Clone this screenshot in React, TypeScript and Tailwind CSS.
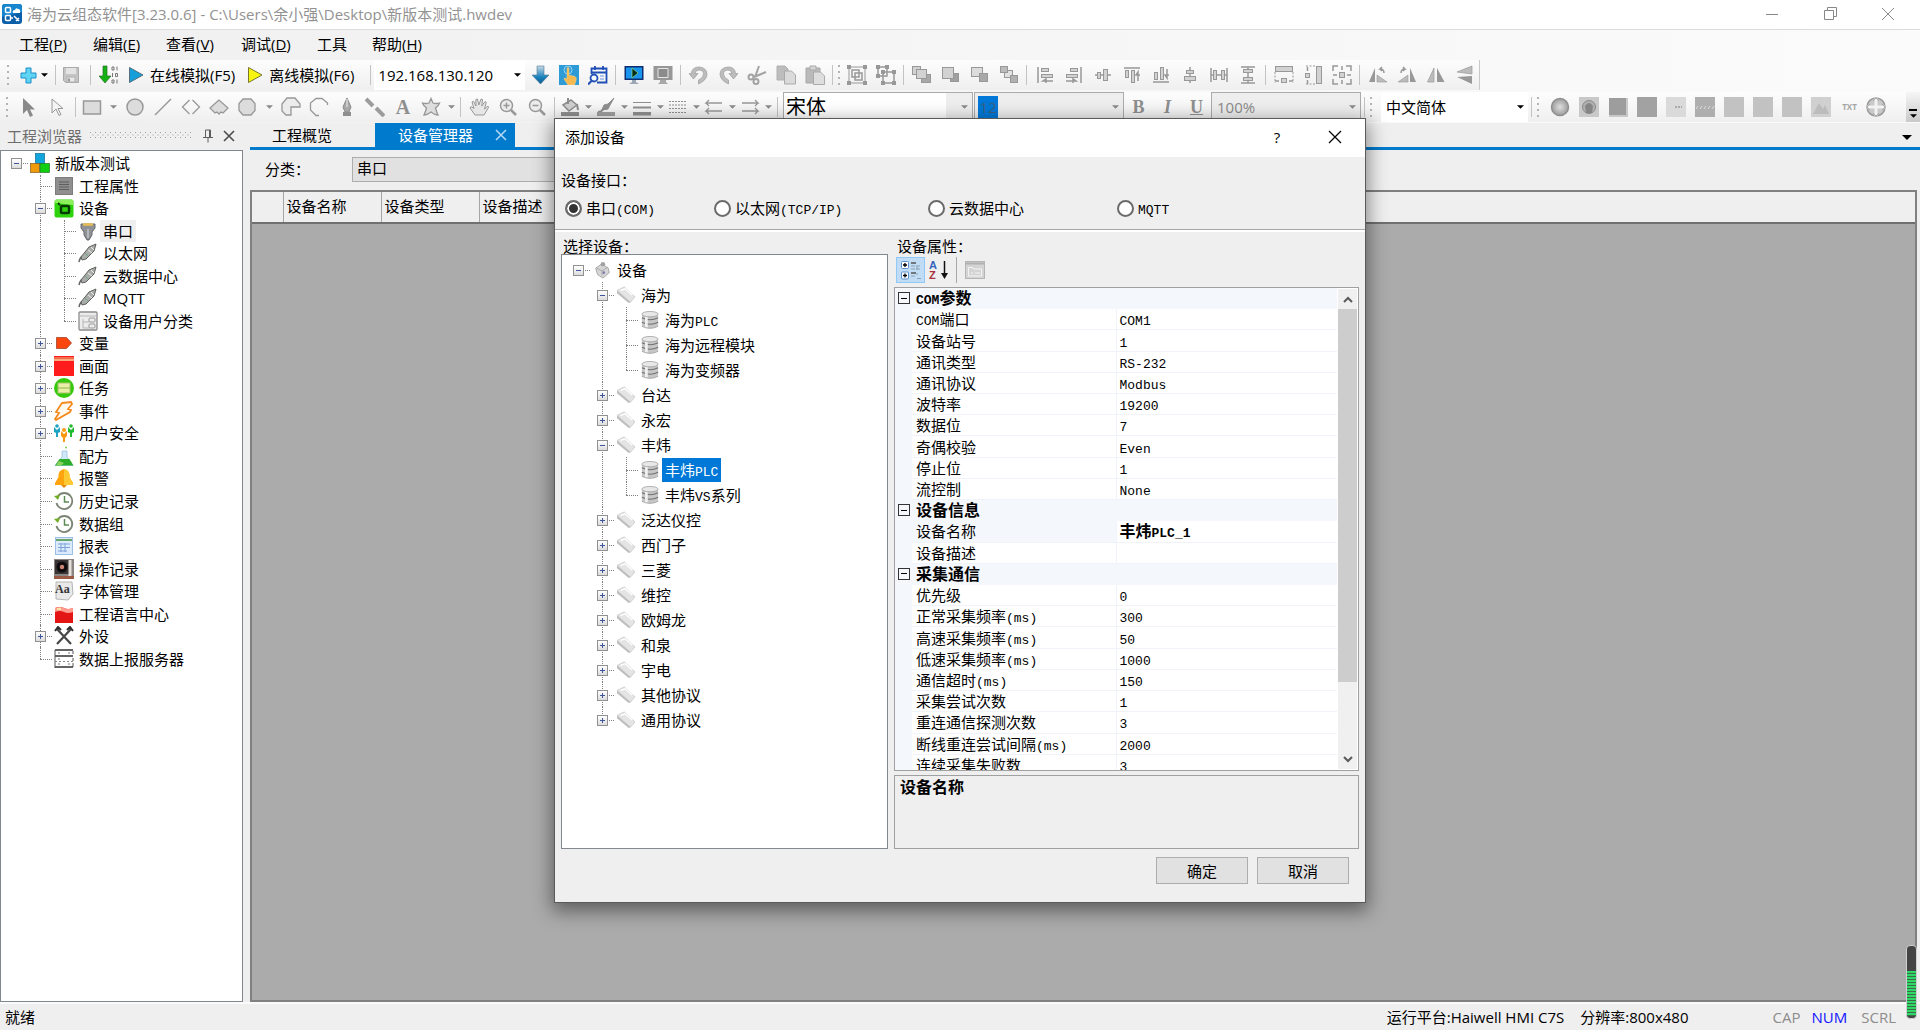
import type { ReactNode } from "react";

const UI = "font-['Open_Sans','Noto_Sans_CJK_SC',sans-serif]";

function Svg({ children, className = "w-5 h-5" }: { children: ReactNode; className?: string }) {
  return (
    <svg viewBox="0 0 20 20" className={`shrink-0 ${className}`} fill="none" aria-hidden="true">
      {children}
    </svg>
  );
}

/* ---------- toolbar icons ---------- */

const G = "#989898";
const L = "#d2d2d2";

const box = (x: number, y: number, w: number, h: number, fill = L) => (
  <rect x={x + 0.5} y={y + 0.5} width={w - 1} height={h - 1} fill={fill} stroke={G} />
);

const dots = (pts: number[][], s = 4) =>
  pts.map(([x, y], i) => <rect key={i} x={x} y={y} width={s} height={s} fill={G} />);

const tool: Record<string, ReactNode> = {
  plus: <path d="M8 3h5v5h5v5h-5v5H8v-5H3V8h5z" fill="#5fd4f5" stroke="#1c8fc4" />,
  save: (
    <>
      <path d="M2.5 2.5h15v15h-13l-2-2z" fill="#c4c4c4" stroke="#a9a9a9" />
      <rect x="5" y="3" width="10" height="6" fill="#e4e4e4" />
      <path d="M6 17v-5h8v5z" fill="#e8e8e8" stroke="#b0b0b0" />
      <path d="M8 13.5v3" stroke="#999" strokeWidth="2" />
    </>
  ),
  binary: (
    <>
      <path d="M4 1h4v10h4l-6 7-6-7h4z" fill="#12b312" stroke="#2f6b2f" strokeWidth=".7" />
      <path d="M13 2h2v3h-2zM18 1.500v4M13.500 8v4M16.500 8.500h2v3h-2zM13 15h2v3h-2zM18 14.500v4" stroke="#777" />
    </>
  ),
  down: <path d="M7 1h7v9h5l-8.500 9L2 10h5z" fill="url(#blueArrow)" stroke="#557b93" strokeWidth=".6" />,
  touch: (
    <>
      <rect width="20" height="20" fill="#2f9bd6" />
      <circle cx="9" cy="5" r="4" stroke="#8fd2f2" />
      <path d="M8 3q1.500-1 2 0v7l6 1.500q2 1 1 4L15.500 20H9l-4-6q0-2 3 0z" fill="#f6b950" stroke="#f8d48c" strokeWidth=".5" />
    </>
  ),
  calendar: (
    <>
      <path d="M3.500 9V3.500h15v14H9M3 7.500h16M7 1v4M15 1v4" stroke="#1f4fb5" strokeWidth="1.800" />
      <circle cx="6" cy="13" r="3.500" fill="#f4f8ff" stroke="#1f4fb5" strokeWidth="1.800" />
      <path d="M3.500 16L0 19.500" stroke="#1f4fb5" strokeWidth="2" />
      <path d="M12 11h4M12 14h4" stroke="#6d93dd" />
    </>
  ),
  monitorPlay: (
    <>
      <rect x=".5" y="1" width="19" height="14" fill="#0d2f6e" />
      <rect x="2" y="2.500" width="16" height="11" fill="#1995f0" />
      <path d="M8 3l6 5-6 5z" fill="#062a1c" stroke="#8be07c" strokeWidth=".7" />
      <path d="M8 15h4v2l3 2H5l3-2z" fill="#9ba7b5" />
    </>
  ),
  monitor: (
    <>
      <path d="M.5 1h19v14H.5z" fill="#979797" />
      <path d="M5 3.500h10v9H5z" stroke="#e6e6e6" fill="#8b8b8b" />
      <path d="M7 15h6v2l2 2H5l2-2z" fill="#a8a8a8" />
    </>
  ),
  undo: <path d="M9.500 19v-4q5-2 5-6 0-4-4.500-4Q6.500 5 6 8.500h3L4.500 14 0 8.500h2.500Q3 2 10 2q7.500 .5 8 7 0 6-8.500 10z" fill="#bcbcbc" stroke="#a2a2a2" strokeWidth=".8" />,
  redo: <path d="M10.500 19v-4q-5-2-5-6 0-4 4.500-4 3.500 0 4 3.500h-3l4.500 5.500L20 8.500h-2.500Q17 2 10 2 2.500 2.500 2 9q0 6 8.500 10z" fill="#bcbcbc" stroke="#a2a2a2" strokeWidth=".8" />,
  cut: (
    <g stroke="#a3a3a3" strokeWidth="2">
      <path d="M12 1L8 12M19 7L7 12" />
      <circle cx="4" cy="12" r="2.500" />
      <circle cx="9" cy="16.500" r="2.500" />
    </g>
  ),
  copy: (
    <>
      <path d="M1 1h8l3 3v11H1z" fill="#bdbdbd" stroke="#b0b0b0" />
      <path d="M8.500 6h7l4 4v9h-11z" fill="#dadada" stroke="#aaa" />
    </>
  ),
  paste: (
    <>
      <path d="M1 3h14v15H1z" fill="#bababa" stroke="#a8a8a8" />
      <path d="M5 1h6v4H5z" fill="#d5d5d5" stroke="#aaa" />
      <path d="M8.500 7h7l4 4v8.500h-11z" fill="#dedede" stroke="#aaa" />
    </>
  ),
  group: (
    <>
      <path d="M2 2h16v16H2z" stroke={G} />
      <path d="M5 5h7v7H5zM8 8h7v7H8z" stroke={G} strokeWidth="1.500" />
      {dots([[0, 0], [16, 0], [0, 16], [16, 16]])}
    </>
  ),
  ungroup: (
    <>
      <path d="M2 2h9v9H2zM7 7h11v11H7z" stroke={G} strokeWidth="1.500" />
      {dots([[0, 0], [9, 0], [0, 9], [5, 5], [16, 5], [5, 16], [16, 16]])}
    </>
  ),
  layer1: <>{box(0, 1, 9, 9)}{box(9, 9, 10, 9, "#a8a8a8")}{box(4, 4, 11, 10)}</>,
  layer2: <>{box(9, 8, 9, 9, "#a0a0a0")}{box(1, 2, 12, 12)}</>,
  layer3: <>{box(1, 2, 12, 10, "#dcdcdc")}{box(9, 8, 9, 9, "#a8a8a8")}</>,
  layer4: <>{box(5, 5, 9, 8, "#e2e2e2")}{box(1, 1, 8, 7, "#bbb")}{box(11, 10, 8, 8, "#b0b0b0")}</>,
  alignL: <><path d="M3 2v16M18 16H8l3-2v4" stroke={G} strokeWidth="1.500" />{box(6, 3, 8, 4)}{box(6, 9, 12, 4)}</>,
  alignR: <><path d="M17 2v16M2 16h10l-3-2v4" stroke={G} strokeWidth="1.500" />{box(6, 3, 8, 4)}{box(2, 9, 12, 4)}</>,
  alignM: <><path d="M2 10h16" stroke={G} strokeWidth="1.500" />{box(4, 7, 4, 7)}{box(10, 4, 5, 12)}</>,
  alignT: <><path d="M2 3h16M16 16V7l-2 3h4" stroke={G} strokeWidth="1.500" />{box(3, 5, 4, 8)}{box(9, 5, 4, 13)}</>,
  alignB: <><path d="M2 17h16M16 4v9l-2-3h4" stroke={G} strokeWidth="1.500" />{box(3, 7, 4, 8)}{box(9, 2, 4, 13)}</>,
  alignC: <><path d="M10 2v16" stroke={G} strokeWidth="1.500" />{box(6, 5, 8, 4)}{box(4, 11, 12, 5)}</>,
  spreadH: <><path d="M2 3v14M18 3v14M2 10h16" stroke={G} strokeWidth="1.500" />{box(4, 5, 4, 10)}{box(12, 5, 4, 10)}</>,
  spreadV: <><path d="M3 2h14M3 18h14M10 2v16" stroke={G} strokeWidth="1.500" />{box(5, 4, 10, 4)}{box(5, 12, 10, 4)}</>,
  sameW: <>{box(1, 1, 18, 6)}{box(7, 13, 6, 5)}<path d="M1 7v11M19 7v11" stroke={G} strokeDasharray="2 1.500" /><path d="M1 16h4M15 16h4" stroke={G} strokeWidth="1.500" /></>,
  sameH: <>{box(13, 1, 6, 18)}{box(2, 8, 5, 5)}<path d="M3 1h10M3 19h10" stroke={G} strokeDasharray="2 1.500" /><path d="M4.500 2v4M4.500 15v4" stroke={G} strokeWidth="1.500" /></>,
  sameWH: <>{box(7, 7, 6, 6)}<path d="M1 6V1h5M14 1h5v5M19 14v5h-5M6 19H1v-5M10 1v4M10 15v4M1 10h4M15 10h4" stroke={G} strokeWidth="1.500" /></>,
  rotL: <><path d="M1 17L7 3v14z" fill={G} /><path d="M9 10l10 7H9z" fill="#bbb" stroke={G} strokeWidth=".6" /><path d="M16 8q0-4-4-4l2-2m-2 2l2 2" stroke={G} strokeWidth="1.500" /></>,
  rotR: <><path d="M19 17L13 3v14z" fill={G} /><path d="M11 10L1 17h10z" fill="#bbb" stroke={G} strokeWidth=".6" /><path d="M4 8q0-4 4-4L6 2m2 2L6 6" stroke={G} strokeWidth="1.500" /></>,
  flipH: <><path d="M1.500 17L8 3v14z" fill="#bcbcbc" stroke={G} strokeWidth=".7" /><path d="M11 3v14h7.500z" fill={G} /></>,
  flipV: <><path d="M17 1v8L2 7z" fill="#bcbcbc" stroke={G} strokeWidth=".7" /><path d="M2 12l15-1v8z" fill={G} /></>,

  cursor: <path d="M4 1v16l4-4 3 7 3-1.500-3-6h5z" fill="#8a8a8a" />,
  cursorO: <path d="M4 2v14l4-4 3 6.500 2-1-3-6h5z" fill="#f4f4f4" stroke={G} />,
  rect: <rect x="1.500" y="4" width="17" height="13" fill="#dcdcdc" stroke={G} strokeWidth="1.500" />,
  circle: <circle cx="10" cy="10" r="8" fill="#dcdcdc" stroke={G} strokeWidth="1.500" />,
  line: <path d="M2 18L18 2" stroke={G} strokeWidth="1.500" />,
  diamond: <path d="M8.500 3L1.500 10l7 7M11.500 3l7 7-7 7" stroke={G} strokeWidth="1.300" />,
  polygon: <path d="M10 3L1 11l5 5 2-1 2 2 2-2 2 1 5-5z" fill="#dcdcdc" stroke={G} strokeWidth="1.300" />,
  octagon: <path d="M6 2h8l4 4.500v7L14 18H6l-4-4.500v-7z" fill="#dcdcdc" stroke={G} strokeWidth="1.300" />,
  pie: <path d="M10 18H5l-4-4V7l5-6h8l5 6v3h-9z" fill="#ececec" stroke={G} strokeWidth="1.300" />,
  arc: <path d="M10 18.500H7L1.500 13V6L7 1.500h6L18.500 6v2" stroke={G} strokeWidth="1.300" />,
  pen: <><path d="M10 1l4 9-2 5H8l-2-5z" fill="#a8a8a8" stroke="#8b8b8b" /><path d="M6 15h8v4H6z" fill="#8f8f8f" /><path d="M10 2v8" stroke="#eee" /></>,
  dashLine: <path d="M1 2l7 7M11 11l8 8" stroke="#9c9c9c" strokeWidth="4" />,
  star: <path d="M10 1.500l2 4.500q3 1 6.500 0-1 3-4 5 1 4 2.500 7-4-.500-7-3-3 2.500-7 3 1.500-3 2.500-7-3-2-4-5 3.500 1 6.500 0z" fill="#dedede" stroke={G} strokeWidth="1.300" />,
  hand: <path d="M6 18l-5-7 1-1.500 3 2L3 5l1.500-.8L7 9 6.800 2.500 8.500 2l1.300 6L12 2l1.500.5L12.800 9 16 4.500l1.300.8L15.500 12 19 9l.5 1.500L15 18z" fill="#e6e6e6" stroke={G} />,
  zoomIn: <><circle cx="8.500" cy="8.500" r="6" fill="#ececec" stroke={G} strokeWidth="1.500" /><path d="M5.500 8.500h6M8.500 5.500v6" stroke={G} strokeWidth="1.500" /><path d="M13 13l5 5" stroke={G} strokeWidth="2.500" /></>,
  zoomOut: <><circle cx="8.500" cy="8.500" r="6" fill="#ececec" stroke={G} strokeWidth="1.500" /><path d="M5.500 8.500h6" stroke={G} strokeWidth="1.500" /><path d="M13 13l5 5" stroke={G} strokeWidth="2.500" /></>,
  bucket: <><path d="M3 8l8-5 6 5-8 6z" fill="#d0d0d0" stroke="#8d8d8d" strokeWidth="1.500" /><path d="M8 1v6M17 7l1 6" stroke="#8d8d8d" strokeWidth="2" /><path d="M1 15h18v4H1z" fill="#8f8f8f" /></>,
  brush: <><path d="M18 1l-6 6-4 1-2 5 6-1 2-4z" fill="#8f8f8f" stroke="#8f8f8f" /><path d="M2 15q4 0 5-3" stroke="#8f8f8f" strokeWidth="2" /><path d="M1 15h18v4H1z" fill="#a0a0a0" /></>,
  weights: <path d="M1 5h18v1H1zM1 9.500h18v2H1zM1 15h18v3.500H1z" fill="#8f8f8f" />,
  dashes: <path d="M1 4.500h18M1 8h18M1 11.500h18M1 15.500h18" stroke="#8f8f8f" strokeDasharray="2 1" />,
  arrowsL: <path d="M18 6H2l3-3M2 6l3 3M18 14H2l3-3M2 14l3 3" stroke={G} strokeWidth="1.300" />,
  arrowsR: <path d="M2 6h16l-3-3M18 6l-3 3M2 14h16l-3-3M18 14l-3 3" stroke={G} strokeWidth="1.300" />,

  lamp: <circle cx="10" cy="10" r="8.500" fill="url(#grayBall)" stroke="#8f8f8f" strokeWidth="1.500" />,
  knob: <><rect width="20" height="20" fill="#c9c9c9" /><circle cx="10" cy="10" r="6.500" fill="#b0b0b0" stroke="#8a8a8a" /><path d="M6 9q4-6 8 0l-1 7H7z" fill="#858585" /></>,
  sq1: <><path d="M1 1h17v17H1z" fill="#9d9d9d" /><path d="M1 19h18V1" stroke="#bbb" strokeWidth="1.500" /></>,
  sq2: <rect width="20" height="20" fill="#a2a2a2" />,
  sq3: <><rect width="20" height="20" fill="#dadada" /><path d="M9 10h7" stroke="#aaa" strokeWidth="2" strokeDasharray="2 1" /></>,
  sq4: <><rect width="20" height="20" fill="#aeaeae" /><path d="M1 12l2-3M5 12l2-3M9 12l2-3M13 12l2-3M17 12l2-3" stroke="#ddd" /></>,
  sq5: <rect width="20" height="20" fill="#c2c2c2" />,
  picture: <><rect width="20" height="20" fill="#d0d0d0" /><path d="M2 17l6-11 4 6 2-4 4 9z" fill="#bcbcbc" /></>,
  globe: <><circle cx="10" cy="10" r="9" fill="#c9c9c9" stroke="#999" strokeWidth="1.500" /><path d="M10 1v18M1 10h18" stroke="#f2f2f2" strokeWidth="3" /><path d="M7 4l3-3 3 3M7 16l3 3 3-3M4 7l-3 3 3 3M16 7l3 3-3 3" stroke="#aaa" /></>,
};

/* ---------- tree icons ---------- */

const plug = (
  <>
    <path d="M1 19q1-5 4-6" stroke="#666" strokeWidth="1.500" />
    <path d="M3 14L11 4l7-3-2 7-8 8-4 1z" fill="#a9aca9" stroke="#5d605d" />
    <path d="M10 7l4 3M13 4l3 3" stroke="#eee" />
    <path d="M7 10l3 3" stroke="#6ca88a" />
  </>
);

const clock = (
  <>
    <path d="M4 5a8 8 0 1 1-1.500 7" stroke="#7b8474" strokeWidth="1.800" />
    <path d="M10.500 5v6H15" stroke="#5b8a52" strokeWidth="1.500" />
    <path d="M0 5l6-1-2 5z" fill="#6fae22" />
  </>
);

const node: Record<string, ReactNode> = {
  cubes: (
    <>
      <rect x="5.500" y=".5" width="9" height="10" fill="#12a5dc" stroke="#0c6d94" strokeWidth=".7" />
      <rect x=".5" y="10.500" width="9" height="9" fill="#f09a0c" stroke="#7d5a1e" strokeWidth=".7" />
      <rect x="10" y="10.500" width="9.500" height="9" fill="#10cf10" stroke="#29702b" strokeWidth=".7" />
    </>
  ),
  props: <><rect x="1.500" y="1.500" width="17" height="17" fill="#8f8f8f" stroke="#7c7c7c" /><path d="M5 6h10M5 8.500h10M5 11h10M5 13.500h10" stroke="#5e5e5e" /></>,
  device: <><rect x=".5" y="1.500" width="19" height="18" rx="2" fill="#2ed30d" /><path d="M1 2h18v5L1 5z" fill="#8cf05c" /><rect x="7" y="8" width="8" height="7" rx="1" stroke="#063b06" strokeWidth="2.500" /><path d="M4 5l2 2" stroke="#063b06" strokeWidth="2" /></>,
  serial: <><path d="M3 3h14v4l-3 4v3l-3 5H9l-3-5v-3L3 7z" fill="#8e9196" stroke="#66696e" /><path d="M5 3.500h10" stroke="#e8bd55" strokeWidth="2.500" /><path d="M10 8v9" stroke="#dfdfdf" /></>,
  plug,
  category: <><rect x="1" y="1" width="18" height="18" rx="1" fill="#ececec" stroke="#8c8c8c" strokeWidth="1.300" /><path d="M1 5h18M5 8v9h6M5 11h6" stroke="#b5b5b5" /><rect x="11" y="7" width="6" height="4" rx="1" stroke="#999" /><rect x="11" y="13" width="6" height="4" rx="1" stroke="#999" /></>,
  tag: <path d="M2.500 4.500h10l5 5.500-5 5.500h-10z" fill="#fa4710" stroke="#a3452b" strokeWidth=".8" />,
  screen: <><rect y="0" width="20" height="20" fill="#ff1c1c" /><path d="M0 1h20v2H0z" fill="#f26b4b" /><path d="M0 4h20" stroke="#ffd6a0" strokeWidth="1.500" /></>,
  task: <><circle cx="10" cy="10" r="10" fill="#36c80c" /><rect x="4" y="5" width="12" height="10" fill="#ecedab" stroke="#a6c56a" /><path d="M4 10h12" stroke="#8bb84c" /></>,
  event: <path d="M8 2l9-1 1 2-4 5 3 1-1 2L2 19l-1-1 4-6-3-1z" fill="#fff8ef" stroke="#f58a1c" strokeWidth="1.800" />,
  users: (
    <>
      <path d="M0 4l3 3 3-3v5l-2 1v4H2v-4L0 9z" fill="#1ea3c4" /><circle cx="3" cy="3" r="1.800" fill="#1ea3c4" />
      <path d="M14 4l3 3 3-3v5l-2 1v4h-2v-4l-2-1z" fill="#22ba2e" /><circle cx="17" cy="3" r="1.800" fill="#22ba2e" />
      <path d="M7 8l3 3 3-3v5l-2 2v4H9v-4l-2-2z" fill="#fb9a12" /><circle cx="10" cy="7" r="2" fill="#fb9a12" />
    </>
  ),
  flask: <><path d="M8 5h5v6l6 8.500H1L8 11z" fill="#cfe7f6" stroke="#9cc1de" strokeWidth=".8" /><path d="M5.500 13h10l4 6.500H1z" fill="#2dae2b" /><path d="M5 15l5 2-3 2.500H2z" fill="#8bd45f" /><circle cx="12" cy="1.500" r="1" fill="#85c556" /></>,
  bell: <><path d="M10 1q6 1 5.500 8L19 15v2H1v-2l3.500-6Q4 2 10 1z" fill="#ffa40d" /><path d="M10 1q6 1 5.500 8L19 15v2h-9z" fill="#ffc933" /><path d="M7 17h6l-3 3z" fill="#e3890a" /></>,
  clock,
  report: <><rect x="1.500" y="1.500" width="17" height="17" fill="#dcebfb" stroke="#9dbfe6" /><path d="M2 4h16" stroke="#6aa56c" strokeWidth="2" /><path d="M4 8h12M4 11.500h12M4 15h9M7 7v9M11 7v9" stroke="#7ea3db" /></>,
  record: <><rect x="0" y="0" width="20" height="20" fill="#8a8582" /><rect y="17" width="20" height="3" fill="#9b5a43" /><rect x="1" y="1" width="14" height="14" fill="#3a3434" /><circle cx="8" cy="8" r="5.500" fill="#0e0c0c" /><circle cx="8" cy="8" r="2.200" fill="#cc8575" /><path d="M16 1v16" stroke="#e5dfda" strokeWidth="3" /></>,
  font: <><path d="M2 1h16l1 12-5 6-12-1z" fill="#e9e9e9" stroke="#b5b5b5" /><text x="1" y="12" fontSize="12" fontWeight="700" fill="#333" fontFamily="Liberation Serif">Aa</text></>,
  lang: <><path d="M1 4q5-2 9 0t9 0v15H1z" fill="#e31515" /><path d="M1 4q5-2 9 0t9 0v4q-5 2-9 0T1 8z" fill="#ff9c8f" /><path d="M3 5h4" stroke="#ffe3a3" strokeWidth="2" /></>,
  tools: <><path d="M3 3l14 15M17 3L3 18" stroke="#474747" strokeWidth="2.200" /><path d="M1 5l3-4 3 3M13 4l3-3 3 4" stroke="#2f2f2f" strokeWidth="2" /></>,
  server: <><path d="M1 1h18M1 7h18M1 18h18" stroke="#333" strokeWidth="1.300" /><path d="M1 1v18M19 2v3M19 9v3M19 14v4" stroke="#555" /><path d="M1 12.500h18" stroke="#888" strokeDasharray="2 2" /><path d="M4 4h2M14 4h2M4 10h2M4 15h2M14 15h2" stroke="#777" /></>,

  hub: <><path d="M3 8l7-5 7 5 1 5-7 6-6-4z" fill="#d6d6d6" stroke="#a0a0a0" /><path d="M4 8l6 3 6-4M10 11v5" stroke="#a5a5a5" /><circle cx="11" cy="3.500" r="2.500" fill="#a2a2a2" /><circle cx="12" cy="13" r="1.500" fill="#7d7dae" /></>,
  eraser: <><path d="M0 5l8-4 12 11-5 6z" fill="#e4e4e4" stroke="#c4c4c4" strokeWidth=".8" /><path d="M0 5v3l13 11 2-1z" fill="#bdbdbd" /><path d="M4 5l5-2 8 7" stroke="#fff" strokeWidth="1.500" /></>,
  db: (
    <>
      <path d="M1 3.500v13q9 5 18 0v-13z" fill="#c6c6c6" />
      <path d="M1 7.500q9 4.500 18 0M1 12.500q9 4.500 18 0" stroke="#707070" strokeWidth="1.300" />
      <path d="M1 17q9 4.500 18 0" stroke="#9a9a9a" />
      <path d="M6 5v13" stroke="#f2f2f2" strokeWidth="3" />
      <ellipse cx="10" cy="3.500" rx="9" ry="3" fill="#e7e7e7" stroke="#999" strokeWidth=".8" />
    </>
  ),
};

type TreeItem = { d: number; t: string; i: string; e?: "+" | "-"; last?: boolean; hover?: boolean; sel?: boolean };

const projectTree: TreeItem[] = [
  { d: 0, t: "新版本测试", i: "cubes", e: "-" },
  { d: 1, t: "工程属性", i: "props" },
  { d: 1, t: "设备", i: "device", e: "-" },
  { d: 2, t: "串口", i: "serial", hover: true },
  { d: 2, t: "以太网", i: "plug" },
  { d: 2, t: "云数据中心", i: "plug" },
  { d: 2, t: "MQTT", i: "plug" },
  { d: 2, t: "设备用户分类", i: "category", last: true },
  { d: 1, t: "变量", i: "tag", e: "+" },
  { d: 1, t: "画面", i: "screen", e: "+" },
  { d: 1, t: "任务", i: "task", e: "+" },
  { d: 1, t: "事件", i: "event", e: "+" },
  { d: 1, t: "用户安全", i: "users", e: "+" },
  { d: 1, t: "配方", i: "flask" },
  { d: 1, t: "报警", i: "bell" },
  { d: 1, t: "历史记录", i: "clock" },
  { d: 1, t: "数据组", i: "clock" },
  { d: 1, t: "报表", i: "report" },
  { d: 1, t: "操作记录", i: "record" },
  { d: 1, t: "字体管理", i: "font" },
  { d: 1, t: "工程语言中心", i: "lang" },
  { d: 1, t: "外设", i: "tools", e: "+" },
  { d: 1, t: "数据上报服务器", i: "server", last: true },
];

const deviceTree: TreeItem[] = [
  { d: 0, t: "设备", i: "hub", e: "-" },
  { d: 1, t: "海为", i: "eraser", e: "-" },
  { d: 2, t: "海为PLC", i: "db" },
  { d: 2, t: "海为远程模块", i: "db" },
  { d: 2, t: "海为变频器", i: "db", last: true },
  { d: 1, t: "台达", i: "eraser", e: "+" },
  { d: 1, t: "永宏", i: "eraser", e: "+" },
  { d: 1, t: "丰炜", i: "eraser", e: "-" },
  { d: 2, t: "丰炜PLC", i: "db", sel: true },
  { d: 2, t: "丰炜VS系列", i: "db", last: true },
  { d: 1, t: "泛达仪控", i: "eraser", e: "+" },
  { d: 1, t: "西门子", i: "eraser", e: "+" },
  { d: 1, t: "三菱", i: "eraser", e: "+" },
  { d: 1, t: "维控", i: "eraser", e: "+" },
  { d: 1, t: "欧姆龙", i: "eraser", e: "+" },
  { d: 1, t: "和泉", i: "eraser", e: "+" },
  { d: 1, t: "宇电", i: "eraser", e: "+" },
  { d: 1, t: "其他协议", i: "eraser", e: "+" },
  { d: 1, t: "通用协议", i: "eraser", e: "+", last: true },
];

const properties: { group: string; rows: [string, string][] }[] = [
  {
    group: "COM参数",
    rows: [
      ["COM端口", "COM1"],
      ["设备站号", "1"],
      ["通讯类型", "RS-232"],
      ["通讯协议", "Modbus"],
      ["波特率", "19200"],
      ["数据位", "7"],
      ["奇偶校验", "Even"],
      ["停止位", "1"],
      ["流控制", "None"],
    ],
  },
  { group: "设备信息", rows: [["设备名称", "丰炜PLC_1"], ["设备描述", ""]] },
  {
    group: "采集通信",
    rows: [
      ["优先级", "0"],
      ["正常采集频率(ms)", "300"],
      ["高速采集频率(ms)", "50"],
      ["低速采集频率(ms)", "1000"],
      ["通信超时(ms)", "150"],
      ["采集尝试次数", "1"],
      ["重连通信探测次数", "3"],
      ["断线重连尝试间隔(ms)", "2000"],
      ["连续采集失败数", "3"],
    ],
  },
];

/* Latin runs sit in a narrow monospace, about half a Chinese character wide. */
function Song({ children }: { children: string }) {
  return (
    <>
      {children.split(/([\x20-\x7e]+)/).map((part, i) =>
        i % 2 ? (
          <span key={i} className="font-['Liberation_Mono',monospace] text-[13px] leading-none">{part}</span>
        ) : (
          part
        )
      )}
    </>
  );
}

function Guide({ item }: { item: TreeItem }) {
  return (
    <span className="relative w-6 self-stretch shrink-0">
      {item.d > 0 && (
        <span className={`absolute left-3 top-0 border-l border-dotted border-[#808080] ${item.last ? "h-1/2" : "h-full"}`} />
      )}
      <span className="absolute left-3 top-1/2 w-3 border-t border-dotted border-[#808080]" />
      {item.e && (
        <button
          aria-label={item.e === "+" ? "展开" : "折叠"}
          className="absolute left-[7px] top-1/2 -mt-[5px] h-[11px] w-[11px] border border-[#919191] bg-linear-to-b from-white to-[#dcdcdc]"
        >
          <svg viewBox="0 0 9 9" className="block w-[9px] h-[9px]">
            <path d={item.e === "+" ? "M2 4.500h5M4.500 2v5" : "M2 4.500h5"} stroke="#3f569c" />
          </svg>
        </button>
      )}
    </span>
  );
}

function TreeRow({ item, tall }: { item: TreeItem; tall?: boolean }) {
  let label = "px-[3px]";
  if (item.hover) label = "px-[3px] bg-[#efefef]";
  if (item.sel) label = "px-[3px] bg-[#0078d7] text-white";
  return (
    <li className={`flex items-center ${tall ? "h-[25px] pl-1" : "min-h-0 flex-1 pl-[3px]"}`}>
      {item.d > 0 && <span className="w-6 shrink-0" />}
      {item.d > 1 && (
        <span className="w-6 shrink-0 self-stretch pl-3">
          <span className="block h-full border-l border-dotted border-[#808080]" />
        </span>
      )}
      <Guide item={item} />
      <span className="flex w-6 shrink-0 justify-center">
        <Svg className={tall ? "w-[18px] h-[18px]" : "w-5 h-5"}>{node[item.i]}</Svg>
      </span>
      <span className={`whitespace-nowrap ${tall ? "leading-6" : "leading-[22px]"} ${label}`}>
        {tall ? <Song>{item.t}</Song> : item.t}
      </span>
    </li>
  );
}

/* ---------- toolbar parts ---------- */

function Tool({ name, w = "w-[29px]" }: { name: string; w?: string }) {
  return (
    <button aria-label={name} className={`flex h-full shrink-0 items-center justify-center ${w}`}>
      <Svg>{tool[name]}</Svg>
    </button>
  );
}

function Caret({ dark, className = "" }: { dark?: boolean; className?: string }) {
  return (
    <span className={`pointer-events-none flex shrink-0 items-center justify-center ${className}`}>
      <svg viewBox="0 0 8 4" className="h-1 w-[7px]">
        <path d="M0 0h8L4 4z" fill={dark ? "#000" : "#8a8a8a"} />
      </svg>
    </span>
  );
}

const Sep = () => <span className="mx-[3px] h-5 w-px shrink-0 bg-[#c3c3c3]" />;

function Grip({ className = "w-4" }: { className?: string }) {
  return (
    <span className={`flex shrink-0 flex-col items-center gap-1 ${className}`}>
      {[0, 1, 2, 3].map((n) => <i key={n} className="h-[2px] w-[2px] bg-[#b4b4b4]" />)}
    </span>
  );
}

function Combo({ label, value, dark, box, text }: { label: string; value: string; dark?: boolean; box: string; text: string }) {
  return (
    <span className={`relative block h-full shrink-0 ${box}`}>
      <select aria-label={label} className={`h-full w-full appearance-none bg-transparent outline-none ${text}`}>
        <option>{value}</option>
      </select>
      <Caret dark={dark} className="absolute right-[2px] top-0 h-full w-3" />
    </span>
  );
}

const bar = "flex h-[30px] items-center bg-linear-to-b from-[#fdfdfd] to-[#efefef]";

function Toolbars() {
  return (
    <>
      <div className={`${bar} mb-[2px] w-fit border-r border-[#c8c8c8]`}>
        <Grip />
        <Tool name="plus" w="w-6" />
        <Caret dark className="w-2 mr-1" />
        <Sep />
        <Tool name="save" w="w-6" />
        <Caret className="w-1 invisible" />
        <Sep />
        <Tool name="binary" w="w-[30px]" />
        <button className="flex items-center gap-[6px] px-1 whitespace-nowrap">
          <svg viewBox="0 0 16 18" className="h-[18px] w-4"><path d="M1.500 1.500v15L15 9z" fill="#149fdb" stroke="#55707c" /></svg>
          在线模拟(F5)
        </button>
        <button className="ml-1 flex items-center gap-[6px] px-1 whitespace-nowrap">
          <svg viewBox="0 0 16 18" className="h-[18px] w-4"><path d="M1.500 1.500v15L15 9z" fill="#f8f411" stroke="#77782c" /></svg>
          离线模拟(F6)
        </button>
        <span className="w-[9px]" />
        <Sep />
        <Combo label="IP" value="192.168.130.120" dark box="w-[151px] bg-white" text="pl-1" />
        <Tool name="down" />
        <Tool name="touch" />
        <Tool name="calendar" />
        <Sep />
        <Tool name="monitorPlay" />
        <Tool name="monitor" />
        <Sep />
        {["undo", "redo", "cut", "copy", "paste"].map((n) => <Tool key={n} name={n} />)}
        <Sep />
        <Grip className="w-[6px]" />
        <Tool name="group" />
        <Tool name="ungroup" />
        <Sep />
        {["layer1", "layer2", "layer3", "layer4"].map((n) => <Tool key={n} name={n} />)}
        <Sep />
        {["alignL", "alignR", "alignM", "alignT", "alignB", "alignC", "spreadH", "spreadV"].map((n) => <Tool key={n} name={n} />)}
        <Sep />
        {["sameW", "sameH", "sameWH"].map((n) => <Tool key={n} name={n} />)}
        <Sep />
        {["rotL", "rotR", "flipH", "flipV"].map((n) => <Tool key={n} name={n} />)}
      </div>

      <div className={`${bar} mb-px`}>
        <Grip className="w-[14px]" />
        <Tool name="cursor" />
        <Tool name="cursorO" />
        <Sep />
        <Tool name="rect" w="w-[26px]" />
        <Caret className="w-4" />
        {["circle", "line", "diamond", "polygon", "octagon"].map((n) => <Tool key={n} name={n} w="w-7" />)}
        <Caret className="w-4" />
        {["pie", "arc", "pen", "dashLine"].map((n) => <Tool key={n} name={n} w="w-7" />)}
        <button className="w-7 shrink-0 font-['Liberation_Serif',serif] text-[20px] font-bold text-[#8f8f8f]">A</button>
        <Tool name="star" w="w-7" />
        <Caret className="w-3" />
        <Sep />
        {["hand", "zoomIn", "zoomOut"].map((n) => <Tool key={n} name={n} />)}
        <Sep />
        {["bucket", "brush", "weights", "dashes", "arrowsL", "arrowsR"].map((n) => (
          <span key={n} className="flex h-full">
            <Tool name={n} w="w-6" />
            <Caret className="w-3" />
          </span>
        ))}
        <Sep />
        <Combo label="字体" value="宋体" box="ml-[2px] w-[190px] border border-[#ababab] bg-linear-to-r from-white from-86% to-[#eee] to-86%" text="pl-[2px] text-[20px]" />
        <span className="ml-px flex h-full w-[150px] shrink-0 items-center justify-between border border-[#ababab] bg-[#eeeeee] pl-[3px]">
          <input aria-label="字号" defaultValue="12" className="h-[22px] w-5 bg-[#0078d7] text-center text-[#3c5f80] outline-none" />
          <Caret className="w-4" />
        </span>
        <button className="w-[29px] shrink-0 font-['Liberation_Serif',serif] text-[18px] font-bold text-[#8f8f8f]">B</button>
        <button className="w-[29px] shrink-0 font-['Liberation_Serif',serif] text-[18px] font-bold italic text-[#8f8f8f]">I</button>
        <button className="w-[29px] shrink-0 font-['Liberation_Serif',serif] text-[18px] font-bold text-[#8f8f8f] underline">U</button>
        <Combo label="缩放" value="100%" box="w-[150px] border border-[#ababab] bg-[#eeeeee]" text="pl-[5px] text-[#8a8a8a]" />
        <Sep />
        <Grip className="w-[6px] mr-[7px]" />
        <Combo label="语言" value="中文简体" dark box="w-[147px] bg-white" text="pl-[5px]" />
        <Sep />
        <Grip className="w-[6px] mr-1" />
        {["lamp", "knob", "sq1", "sq2", "sq3", "sq4", "sq5", "sq5", "sq5", "picture"].map((n, i) => <Tool key={i} name={n} />)}
        <button className="w-[29px] shrink-0 text-[8px] font-bold text-[#a5a5a5]">TXT</button>
        <Tool name="globe" w="w-6" />
        <button aria-label="更多" className="ml-auto flex h-full w-[14px] flex-col items-center justify-end gap-[3px] bg-linear-to-b from-[#f6f6f6] to-[#c9c9c9] pb-1">
          <i className="h-[2px] w-2 bg-black" />
          <Caret dark />
        </button>
      </div>
    </>
  );
}

function ProjectPanel() {
  return (
    <aside className="flex w-[243px] shrink-0 flex-col">
      <header className="flex h-[27px] items-center pb-[2px] pl-[7px] text-[#6d6d6d]">
        工程浏览器
        <svg className="ml-2 h-[7px] flex-1">
          <defs>
            <pattern id="dots" width="5" height="5" patternUnits="userSpaceOnUse">
              <path d="M0 0h1v1H0zM2.500 2.500h1v1h-1z" fill="#a0a0a0" />
            </pattern>
          </defs>
          <rect width="100%" height="7" fill="url(#dots)" />
        </svg>
        <button aria-label="固定" className="ml-[10px] w-[14px]">
          <svg viewBox="0 0 14 14" className="h-[14px] w-[14px]" fill="none" stroke="#5d5d5d"><path d="M4.500 1v7.500h5V1zM8.500 1v7M2 8.500h10M7 9v4.500" /></svg>
        </button>
        <button aria-label="关闭" className="mx-2">
          <svg viewBox="0 0 12 12" className="h-3 w-3"><path d="M1 1l10 10M11 1L1 11" stroke="#4d4d4d" strokeWidth="1.600" /></svg>
        </button>
      </header>
      <div className="flex-1 border border-[#828790] bg-white pt-px">
        <ul className="flex h-[518px] flex-col">
          {projectTree.map((item, i) => <TreeRow key={i} item={item} />)}
        </ul>
      </div>
    </aside>
  );
}

function Workspace() {
  return (
    <main className="ml-[7px] flex min-w-0 flex-1 flex-col">
      <nav className="flex h-[27px] items-stretch border-b-[3px] border-[#007acc]">
        <button className="w-[125px] pr-[21px] pl-[22px] text-left">工程概览</button>
        <div className="flex w-[140px] items-center bg-[#007acc] pl-[23px] text-white">
          <button>设备管理器</button>
          <button aria-label="关闭" className="ml-[22px]">
            <svg viewBox="0 0 12 12" className="h-3 w-3"><path d="M1 1l10 10M11 1L1 11" stroke="#b5daf5" strokeWidth="1.500" /></svg>
          </button>
        </div>
        <span className="ml-auto flex w-[27px] items-center justify-center pt-1">
          <svg viewBox="0 0 10 5" className="h-[5px] w-[10px]"><path d="M0 0h10L5 5z" fill="#000" /></svg>
        </span>
      </nav>
      <div className="flex h-10 items-center pb-[2px] pl-[15px]">
        <label htmlFor="category" className="w-[87px]">分类：</label>
        <select id="category" className="h-[25px] w-[240px] appearance-none border border-[#adadad] bg-[#e1e1e1] pb-[2px] pl-1">
          <option>串口</option>
        </select>
      </div>
      <div className="mr-[3px] flex-1 border-2 border-[#808080] bg-[#ababab]">
        <table className="w-full table-fixed border-b-2 border-[#707070] bg-[#efefef]">
          <thead>
            <tr className="h-[31px] text-left">
              <th className="w-[31px] border-r border-[#a5a5a5]" />
              {["设备名称", "设备类型", "设备描述"].map((h) => (
                <th key={h} className="w-[98px] border-r border-[#a5a5a5] pb-[2px] pl-[3px] font-normal">{h}</th>
              ))}
              <th />
            </tr>
          </thead>
        </table>
      </div>
    </main>
  );
}

function PropertyGrid() {
  return (
    <div className="flex h-[484px] border border-[#a0a0a0] bg-white">
      <div className="min-w-0 flex-1 overflow-hidden">
        <table className="h-[488px] w-full table-fixed leading-5">
          <colgroup>
            <col className="w-[17px]" />
            <col className="w-[204px]" />
            <col />
          </colgroup>
          {properties.map(({ group, rows }) => (
            <tbody key={group}>
              <tr className="bg-[#f4f7fc]">
                <td>
                  <button aria-label="折叠" className="mx-auto block h-3 w-3 border border-[#333]">
                    <span className="mx-auto block h-px w-[6px] bg-black" />
                  </button>
                </td>
                <th colSpan={2} className="border-b border-[#f4f7fc] pl-1 text-left text-[16px] font-bold"><Song>{group}</Song></th>
              </tr>
              {rows.map(([name, value]) => (
                <tr key={name}>
                  <td className="bg-[#f4f7fc]" />
                  <th className={`border-r border-b border-[#f0f3f9] pl-1 text-left font-normal whitespace-nowrap ${name === "设备名称" ? "bg-[#f4f7fc]" : ""}`}>
                    <Song>{name}</Song>
                  </th>
                  <td className={`border-b border-[#f0f3f9] pl-[3px] ${name === "设备名称" ? "text-[16px] font-bold" : ""}`}>
                    <Song>{value}</Song>
                  </td>
                </tr>
              ))}
            </tbody>
          ))}
        </table>
      </div>
      <div className="m-px flex w-[19px] flex-col bg-[#f0f0f0]">
        <button aria-label="向上" className="flex h-5 items-center justify-center">
          <svg viewBox="0 0 10 7" className="h-[7px] w-[10px]" fill="none"><path d="M1 6l4-4 4 4" stroke="#5a5a5a" strokeWidth="2" /></svg>
        </button>
        <div className="h-[373px] bg-[#cdcdcd]" />
        <button aria-label="向下" className="mt-auto flex h-5 items-center justify-center">
          <svg viewBox="0 0 10 7" className="h-[7px] w-[10px]" fill="none"><path d="M1 1l4 4 4-4" stroke="#5a5a5a" strokeWidth="2" /></svg>
        </button>
      </div>
    </div>
  );
}

function AddDeviceDialog() {
  const ports = [
    ["串口(COM)", "w-[149px]"],
    ["以太网(TCP/IP)", "w-[214px]"],
    ["云数据中心", "w-[189px]"],
    ["MQTT", "w-[120px]"],
  ];
  const button = "h-[27px] w-[92px] border border-[#adadad] bg-[#e1e1e1]";
  return (
    <section role="dialog" aria-label="添加设备" className="absolute top-[118px] left-[554px] w-[812px] border border-[#5a5a5a] bg-[#efefef] shadow-[0_6px_18px_2px_rgba(0,0,0,0.45)]">
      <header className="flex h-[38px] items-center bg-white pb-[2px] pl-[10px]">
        <h2>添加设备</h2>
        <button className="ml-auto w-[30px]">?</button>
        <button aria-label="关闭" className="mr-[23px] ml-9">
          <svg viewBox="0 0 14 14" className="h-[14px] w-[14px]"><path d="M1 1l12 12M13 1L1 13" stroke="#000" strokeWidth="1.200" /></svg>
        </button>
      </header>

      <fieldset className="border-b border-[#a8a8a8] pt-[11px] pb-[6px]">
        <legend className="float-left h-[25px] w-full pl-[6px] leading-6">设备接口：</legend>
        <div className="clear-both flex h-[30px] items-center pl-[10px]">
          {ports.map(([label, w], i) => (
            <label key={label} className={`flex items-center gap-1 ${w}`}>
              <input
                type="radio"
                name="port"
                defaultChecked={i === 0}
                className="h-[17px] w-[17px] shrink-0 appearance-none rounded-full border-2 border-[#6b6b6b] bg-white checked:bg-[#333] checked:shadow-[inset_0_0_0_2px_#fff]"
              />
              <span className="whitespace-nowrap"><Song>{label}</Song></span>
            </label>
          ))}
        </div>
      </fieldset>

      <div className="flex gap-[6px] border-t-2 border-white px-[6px] pt-[3px]">
        <div className="flex w-[327px] shrink-0 flex-col">
          <h3 className="h-[19px] pl-[2px] leading-[23px]">选择设备：</h3>
          <ul className="flex-1 border border-[#828790] bg-white pt-[2px]">
            {deviceTree.map((item, i) => <TreeRow key={i} item={item} tall />)}
          </ul>
        </div>

        <div className="min-w-0 flex-1">
          <h3 className="h-[19px] pl-[3px] leading-[23px]">设备属性：</h3>
          <div className="mt-[3px] mb-1 flex h-[26px] items-center pl-[2px]">
            <button aria-label="按分类" className="flex h-full w-[29px] items-center justify-center border border-[#90c8f6] bg-[#c0ddf5]">
              <Svg>
                <rect x=".5" y="1.500" width="7" height="7" rx="1" fill="#fff" stroke="#5b8fd0" />
                <rect x=".5" y="12" width="7" height="7" rx="1" fill="#fff" stroke="#5b8fd0" />
                <path d="M2 5h4M4 3v4M2 15.500h4M4 13.500v4" stroke="#000" strokeWidth="1.300" />
                <path d="M10 3h5M10 13h5" stroke="#555" strokeWidth="1.300" />
                <path d="M10 6h10M10 9h10M10 16h5M16 18.500h4M16 6v5M16 13v2" stroke="#8ea0b5" strokeDasharray="4 1" />
              </Svg>
            </button>
            <button aria-label="按字母" className="flex h-full w-[28px] items-center justify-center">
              <Svg>
                <text x="0" y="9" fontSize="11" fontWeight="700" fill="#3565bd" fontFamily="Liberation Sans">A</text>
                <text x="0" y="19" fontSize="11" fontWeight="700" fill="#a8323a" fontFamily="Liberation Sans">Z</text>
                <path d="M15.500 1v15" stroke="#111" strokeWidth="1.500" />
                <path d="M12 13h7l-3.500 6z" fill="#111" />
              </Svg>
            </button>
            <span className="mr-2 ml-[3px] h-full w-px bg-[#a8a8a8]" />
            <button aria-label="属性页" disabled className="flex h-full w-5 items-center justify-center">
              <Svg>
                <rect x=".5" y="1.500" width="19" height="17" fill="#d4d4d4" stroke="#b5b5b5" />
                <path d="M1 3.500h18" stroke="#b0b0b0" strokeWidth="2" />
                <path d="M3.500 7.500h4l1 1.500h8v7h-13zM6 13h2M10 13h5" stroke="#f4f4f4" />
              </Svg>
            </button>
          </div>
          <PropertyGrid />
          <div className="mt-1 h-[74px] border border-[#a0a0a0] pl-[5px] text-[16px] leading-[22px] font-bold">设备名称</div>
        </div>
      </div>

      <footer className="flex justify-end gap-[9px] pt-2 pr-4 pb-[18px]">
        <button className={button}>确定</button>
        <button className={button}>取消</button>
      </footer>
    </section>
  );
}

export default function App() {
  const menus = [
    ["工程", "P", "w-[74px]"],
    ["编辑", "E", "w-[73px]"],
    ["查看", "V", "w-[75px]"],
    ["调试", "D", "w-[76px]"],
    ["工具", "", "w-[55px]"],
    ["帮助", "H", "w-[74px]"],
  ];
  return (
    <div className={`relative flex h-screen flex-col overflow-hidden bg-[#efefef] text-[15px] leading-5 text-black ${UI}`}>
      <svg className="absolute h-0 w-0" aria-hidden="true">
        <defs>
          <linearGradient id="blueArrow" x1="0" y1="0" x2="0" y2="1">
            <stop offset="0" stopColor="#c6d8e4" />
            <stop offset=".6" stopColor="#1d83bd" />
            <stop offset="1" stopColor="#0b5c91" />
          </linearGradient>
          <radialGradient id="grayBall">
            <stop offset="0" stopColor="#dedede" />
            <stop offset="1" stopColor="#9c9c9c" />
          </radialGradient>
        </defs>
      </svg>

      <header className="flex h-[30px] shrink-0 items-center border-b border-[#dcdcdc] bg-white pb-[2px] pl-[2px] text-[#929292]">
        <svg viewBox="0 0 20 20" className="h-5 w-5" fill="none">
          <rect width="20" height="20" rx="3" fill="#0a5fa8" />
          <path d="M0 3q0-3 3-3h14q3 0 3 3v5L0 13z" fill="#1786cf" />
          <rect x="3.500" y="3.500" width="5" height="5" rx="1" stroke="#fff" strokeWidth="1.500" />
          <rect x="3.500" y="11.500" width="5" height="5" rx="1" stroke="#fff" strokeWidth="1.500" />
          <path d="M11 9q-1-3 2-3 1-3 3-1 3 0 2 4z" fill="#fff" />
          <path d="M12 12l5 5M17 14l-3 3M9 14h2" stroke="#fff" strokeWidth="1.500" />
        </svg>
        <h1 className="ml-[5px]">海为云组态软件[3.23.0.6] - C:\Users\余小强\Desktop\新版本测试.hwdev</h1>
        <div className="ml-auto flex items-center">
          <button aria-label="最小化" className="w-[58px]"><svg viewBox="0 0 12 12" className="mx-auto h-3 w-3"><path d="M0 6.500h12" stroke="#888" /></svg></button>
          <button aria-label="还原" className="w-[58px]"><svg viewBox="0 0 13 13" className="mx-auto h-[13px] w-[13px]" fill="none" stroke="#888"><path d="M.5 3.500h9v9h-9zM3.500 3V.5h9v9H10" /></svg></button>
          <button aria-label="关闭" className="mr-[3px] w-[58px]"><svg viewBox="0 0 12 12" className="mx-auto h-3 w-3"><path d="M0 0l12 12M12 0L0 12" stroke="#888" /></svg></button>
        </div>
      </header>

      <div className="shrink-0 bg-linear-to-r from-[#f0f0f0] to-[#fbfbfb]">
        <nav className="flex h-[30px] items-center pb-[2px] pl-[19px]">
          {menus.map(([name, key, w]) => (
            <button key={name} className={`text-left whitespace-nowrap ${w}`}>
              {name}
              {key && <>(<u>{key}</u>)</>}
            </button>
          ))}
        </nav>
        <Toolbars />
      </div>

      <div className="flex min-h-0 flex-1">
        <ProjectPanel />
        <Workspace />
      </div>

      <footer className="flex h-7 shrink-0 items-center border-t-2 border-[#fafafa] pl-[5px]">
        <span>就绪</span>
        <span className="ml-auto">运行平台:Haiwell HMI C7S</span>
        <span className="ml-4">分辨率:800x480</span>
        <span className="ml-[84px] text-[#8c8c8c]">CAP</span>
        <span className="ml-[11px] text-[#1414ff]">NUM</span>
        <span className="mr-6 ml-[14px] text-[#8c8c8c]">SCRL</span>
      </footer>

      <div className="absolute right-[3px] bottom-[11px] flex h-[74px] w-[11px] flex-col rounded-[4px] border border-[#d0d0d0] bg-[#444] pt-[25px] pb-[2px]">
        <div className="flex-1 bg-[repeating-linear-gradient(#2fd768_0_2px,#3c6b48_2px_3px)]" />
      </div>

      <AddDeviceDialog />
    </div>
  );
}
